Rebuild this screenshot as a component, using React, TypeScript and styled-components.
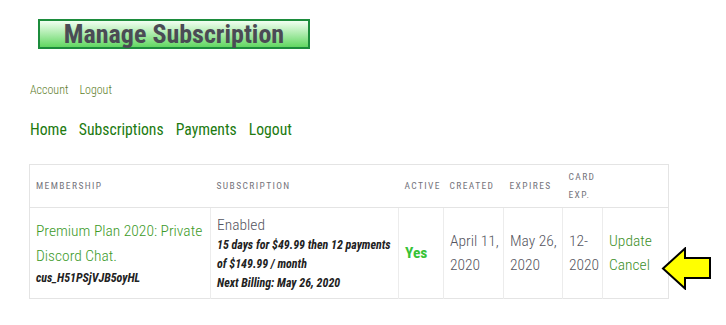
import React, { FC } from 'react';
import styled, { createGlobalStyle } from 'styled-components';

const GlobalStyle = createGlobalStyle`
  body {
    margin: 0;
    background: #fff;
    font-family: Roboto, 'Liberation Sans', sans-serif;
    font-stretch: 80%;
  }
`;

const Page = styled.div`
  padding: 19px 0 0 29px;
  display: flex;
  flex-direction: column;
`;

const TitleBox = styled.h1`
  margin: 0 0 0 9px;
  width: 272px;
  height: 30px;
  box-sizing: border-box;
  border: 2px solid #1c8c3c;
  background: linear-gradient(#f2fff2, #62d762);
  color: #4b4b55;
  font-size: 26px;
  font-weight: 700;
  line-height: 26px;
  text-align: center;
`;

const TopLinks = styled.div`
  display: flex;
  gap: 11px;
  margin: 34px 0 0 1px;
  font-size: 12px;
  font-weight: 300;
  line-height: 14px;
`;

const TopLink = styled.a`
  color: #5d7d2a;
  text-decoration: none;
`;

const Nav = styled.nav`
  display: flex;
  gap: 12px;
  margin: 24px 0 0 1px;
  font-size: 15.7px;
  line-height: 18px;
`;

const NavLink = styled.a`
  color: #217a10;
  text-decoration: none;
`;

const TableWrap = styled.div`
  position: relative;
  width: 639px;
  margin-top: 25px;
`;

const Table = styled.table`
  width: 639px;
  table-layout: fixed;
  border-collapse: collapse;
  border: 1px solid #e4e4e4;
`;

const Th = styled.th<{ w: number }>`
  width: ${({ w }) => w}px;
  padding: 3px 2px 3px 6px;
  text-align: left;
  font-size: 9.5px;
  font-weight: 400;
  letter-spacing: 1.4px;
  line-height: 18px;
  color: #74747c;
  text-transform: uppercase;
  border-bottom: 1px solid #e4e4e4;
  height: 43px;
  box-sizing: border-box;
  vertical-align: middle;
`;

const Td = styled.td`
  padding: 0 2px 0 6px;
  border-left: 1px solid #ececec;
  vertical-align: middle;
  font-size: 15.5px;
  font-weight: 300;
  line-height: 24px;
  color: #555560;
  height: 91px;
  box-sizing: border-box;
  &:first-child { border-left: none; }
`;

const PlanName = styled.div`
  color: #3c9a28;
  line-height: 25px;
`;

const Small = styled.div`
  font-size: 12px;
  font-weight: 700;
  font-style: italic;
  color: #222;
  line-height: 19px;
`;

const Status = styled.div`
  line-height: 22px;
`;

const Yes = styled.span`
  color: #36c236;
  font-weight: 700;
`;

const Action = styled.a`
  display: block;
  color: #3c8f28;
  text-decoration: none;
`;

const ArrowMark = styled.svg`
  position: absolute;
  left: 632px;
  top: 83px;
`;

const Arrow: FC = () => (
  <ArrowMark width="51" height="43" viewBox="0 0 51 43">
    <polygon points="2,21.5 24,1.5 24,11 49,11 49,31 24,31 24,41.5" fill="#ffff00" stroke="#000" strokeWidth="2" />
  </ArrowMark>
);

const App: FC = () => (
  <>
    <GlobalStyle />
    <Page>
      <TitleBox>Manage Subscription</TitleBox>
      <TopLinks>
        <TopLink href="#">Account</TopLink>
        <TopLink href="#">Logout</TopLink>
      </TopLinks>
      <Nav>
        <NavLink href="#">Home</NavLink>
        <NavLink href="#">Subscriptions</NavLink>
        <NavLink href="#">Payments</NavLink>
        <NavLink href="#">Logout</NavLink>
      </Nav>
      <TableWrap>
        <Table>
          <thead>
            <tr>
              <Th w={181}>Membership</Th>
              <Th w={188}>Subscription</Th>
              <Th w={45}>Active</Th>
              <Th w={60}>Created</Th>
              <Th w={59}>Expires</Th>
              <Th w={40}>Card Exp.</Th>
              <Th w={66}> </Th>
            </tr>
          </thead>
          <tbody>
            <tr>
              <Td>
                <PlanName>Premium Plan 2020: Private Discord Chat.</PlanName>
                <Small>cus_H51PSjVJB5oyHL</Small>
              </Td>
              <Td>
                <Status>Enabled</Status>
                <Small>15 days for $49.99 then 12 payments of $149.99 / month</Small>
                <Small>Next Billing: May 26, 2020</Small>
              </Td>
              <Td><Yes>Yes</Yes></Td>
              <Td>April 11, 2020</Td>
              <Td>May 26, 2020</Td>
              <Td>12-2020</Td>
              <Td>
                <Action href="#">Update</Action>
                <Action href="#">Cancel</Action>
              </Td>
            </tr>
          </tbody>
        </Table>
        <Arrow />
      </TableWrap>
    </Page>
  </>
);

export default App;
